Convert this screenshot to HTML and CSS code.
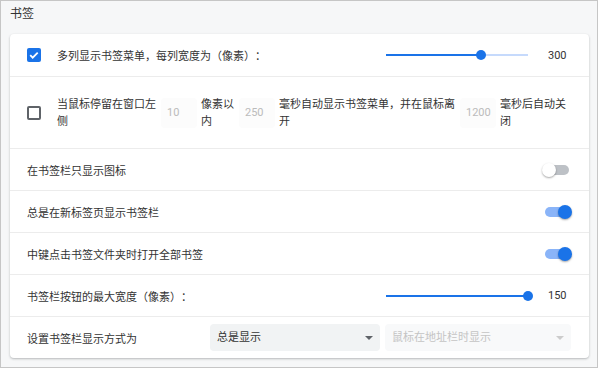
FILE: index.html
```html
<!doctype html>
<html lang="zh-CN">
<head>
    <meta charset="UTF-8">
    <title>书签</title>
    <link rel="stylesheet" href="styles.css">
</head>
<body>
    <div class="frame">
        <h2 class="title">书签</h2>
        <div class="card">
            <div class="row row-1">
                <span class="check on"><svg viewBox="0 0 14 14" width="14" height="14"><path d="M3.2 7.2l2.5 2.5 5-5" fill="none" stroke="#fff" stroke-width="1.8"/></svg></span>
                <span class="label">多列显示书签菜单，每列宽度为（像素）：</span>
                <div class="slider"><div class="fill" style="width: 67%"></div><div class="thumb" style="left: 67%"></div></div>
                <span class="value">300</span>
            </div>
            <div class="row row-2">
                <span class="check"></span>
                <span class="part t1">当鼠标停留在窗口左侧</span>
                <span class="num">10</span>
                <span class="part t2">像素以内</span>
                <span class="num">250</span>
                <span class="part t3">毫秒自动显示书签菜单，并在鼠标离开</span>
                <span class="num">1200</span>
                <span class="part t4">毫秒后自动关闭</span>
            </div>
            <div class="row">
                <span class="label plain">在书签栏只显示图标</span>
                <span class="toggle"></span>
            </div>
            <div class="row">
                <span class="label plain">总是在新标签页显示书签栏</span>
                <span class="toggle on"></span>
            </div>
            <div class="row">
                <span class="label plain">中键点击书签文件夹时打开全部书签</span>
                <span class="toggle on"></span>
            </div>
            <div class="row">
                <span class="label plain">书签栏按钮的最大宽度（像素）：</span>
                <div class="slider"><div class="fill" style="width: 100%"></div><div class="thumb" style="left: 100%"></div></div>
                <span class="value">150</span>
            </div>
            <div class="row">
                <span class="label plain">设置书签栏显示方式为</span>
                <div class="select">总是显示<i class="arrow"></i></div>
                <div class="select disabled">鼠标在地址栏时显示<i class="arrow"></i></div>
            </div>
        </div>
    </div>
</body>
</html>
```

FILE: styles.css
```css
* {
    margin: 0;
    padding: 0;
    box-sizing: border-box;
}

body {
    font-family: Roboto, "Noto Sans CJK SC", sans-serif;
    font-size: 11px;
    color: #333;
    background: #fff;
    text-spacing-trim: space-all;
}

.frame {
    width: 598px;
    height: 368px;
    border: 1px solid #c6c6c6;
    background: #f6f7f8;
    padding: 0 0 0 9px;
}

.title {
    height: 33px;
    font-size: 12px;
    font-weight: 400;
    line-height: 26px;
    color: #333;
}

.card {
    width: 579px;
    background: #fff;
    border-radius: 4px;
    box-shadow: 0 1px 2px rgba(60, 64, 67, .25), 0 1px 3px rgba(60, 64, 67, .1);
}

.row {
    display: flex;
    align-items: center;
    height: 42px;
    padding: 0 18px 0 17px;
    border-top: 1px solid #ececec;
}

.row-1 {
    border-top: none;
}

.row-2 {
    height: 72px;
    line-height: 17px;
}

.label {
    flex: 1;
    margin-left: 16px;
}

.label.plain {
    margin-left: 0;
}

.check {
    flex: none;
    display: block;
    width: 14px;
    height: 14px;
    border: 2px solid #5f6368;
    border-radius: 2px;
}

.check.on {
    border: none;
    background: #1a73e8;
}

.check svg {
    display: block;
}

.part {
    flex: none;
}

.t1 {
    width: 100px;
    margin-left: 16px;
}

.t2 {
    width: 34px;
}

.t3 {
    width: 177px;
}

.t4 {
    width: 67px;
}

.num {
    flex: none;
    width: 36px;
    height: 30px;
    margin: 0 4px;
    padding-left: 6px;
    line-height: 30px;
    border-radius: 4px;
    background: #fcfcfc;
    color: #bbb;
}

.slider {
    position: relative;
    width: 142px;
    height: 2px;
    background: #c6dafc;
}

.fill {
    height: 2px;
    background: #1a73e8;
}

.thumb {
    position: absolute;
    top: -4px;
    width: 10px;
    height: 10px;
    margin-left: -5px;
    border-radius: 50%;
    background: #1a73e8;
}

.value {
    width: 23px;
    margin-left: 20px;
    color: #333;
}

.toggle {
    position: relative;
    width: 26px;
    height: 10px;
    margin-right: 2px;
    border-radius: 5px;
    background: #bdc1c6;
}

.toggle::after {
    content: "";
    position: absolute;
    top: -2px;
    left: -1px;
    width: 14px;
    height: 14px;
    border-radius: 50%;
    background: #fff;
    box-shadow: 0 1px 2px rgba(0, 0, 0, .35);
}

.toggle.on {
    margin-right: 0;
    background: #8ab4f8;
}

.toggle.on::after {
    left: auto;
    right: -1px;
    background: #1a73e8;
}

.select {
    position: relative;
    width: 170px;
    height: 27px;
    padding-left: 7px;
    line-height: 27px;
    border-radius: 4px;
    background: #f1f3f4;
    color: #333;
}

.select.disabled {
    width: 186px;
    margin-left: 5px;
    background: #f8f9fa;
    color: #c4c4c4;
}

.arrow {
    position: absolute;
    right: 7px;
    top: 12px;
    width: 0;
    height: 0;
    border-left: 4px solid transparent;
    border-right: 4px solid transparent;
    border-top: 4px solid #5f6368;
}

.select.disabled .arrow {
    border-top-color: #ccc;
}
```
